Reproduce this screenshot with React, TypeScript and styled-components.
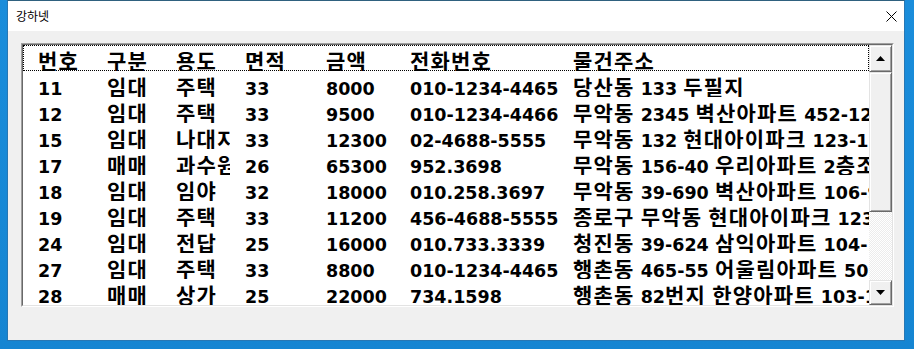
import React from 'react';
import styled, { createGlobalStyle } from 'styled-components';

const Global = createGlobalStyle`
  html, body {
    margin: 0;
    padding: 0;
    background: #1688d6;
  }
  body {
    width: 914px;
    height: 349px;
    overflow: hidden;
    font-family: "Noto Sans CJK KR", "Noto Sans", sans-serif;
  }
`;

const Desktop = styled.div`
  width: 914px;
  height: 349px;
  box-sizing: border-box;
  padding-left: 7px;
  background: linear-gradient(180deg, #1a8ddb 0%, #1585d2 100%);
`;

const Window = styled.div`
  width: 898px;
  height: 341px;
  box-sizing: border-box;
  border: 1px solid #2777b4;
  border-top-color: #2f617f;
  background: #f0f0f0;
  display: flex;
  flex-direction: column;
`;

const TitleBar = styled.div`
  height: 30px;
  flex: none;
  background: #ffffff;
  display: flex;
  align-items: center;
  justify-content: space-between;
  padding: 0 7px 0 8px;
`;

const Title = styled.span`
  font-family: "Noto Sans CJK KR", sans-serif;
  font-size: 12px;
  color: #000;
  line-height: 1;
  padding-bottom: 1px;
`;

const CloseIcon = styled.svg`
  width: 11px;
  height: 11px;
  display: block;
  margin-top: 1px;
`;

const Client = styled.div`
  flex: 1;
  padding: 12px 10px 0 13px;
`;

const SunkenOuter = styled.div`
  width: 873px;
  height: 264px;
  box-sizing: border-box;
  border: 1px solid;
  border-color: #a0a0a0 #ffffff #ffffff #a0a0a0;
`;

const SunkenInner = styled.div`
  width: 100%;
  height: 100%;
  box-sizing: border-box;
  border: 1px solid;
  border-color: #696969 #e3e3e3 #e3e3e3 #696969;
  display: flex;
`;

const ListContent = styled.div`
  flex: 1;
  min-width: 0;
  background: #ffffff;
  overflow: hidden;
`;

const Row = styled.div<{ $focus?: boolean }>`
  height: 26px;
  display: flex;
  padding-left: 15px;
  box-sizing: border-box;
  width: 100%;
  outline: ${(p) => (p.$focus ? '1px dotted #000' : 'none')};
  outline-offset: -1px;
`;

const Cell = styled.div<{ $w?: number }>`
  flex: ${(p) => (p.$w ? `0 0 ${p.$w}px` : '1 0 auto')};
  height: 26px;
  box-sizing: border-box;
  padding-top: 5px;
  overflow: hidden;
  white-space: nowrap;
  font-family: "DejaVu Sans", "Noto Sans CJK KR", sans-serif;
  font-weight: 700;
  font-size: 17.5px;
  line-height: 26px;
  color: #000;
`;

const Clip = styled.div<{ $w?: number }>`
  width: ${(p) => (p.$w ? `${p.$w}px` : 'auto')};
  overflow: hidden;
  white-space: nowrap;
`;

const Ko = styled.span`
  font-family: "Noto Sans CJK KR", sans-serif;
  font-size: 21px;
  font-weight: 700;
  letter-spacing: 1.2px;
  line-height: 0;
`;

const ScrollBar = styled.div`
  flex: 0 0 23px;
  display: flex;
  flex-direction: column;
`;

const Raised = styled.div<{ $h?: number }>`
  height: ${(p) => (p.$h ? `${p.$h}px` : 'auto')};
  flex: none;
  box-sizing: border-box;
  background: #f0f0f0;
  border: 1px solid;
  border-color: #e3e3e3 #696969 #696969 #e3e3e3;
  box-shadow: inset 1px 1px #ffffff, inset -1px -1px #a0a0a0;
  display: flex;
  align-items: center;
  justify-content: center;
`;

const Track = styled.div`
  flex: 1;
  background: repeating-conic-gradient(#ffffff 0% 25%, #ececec 0% 50%) 0 0 / 2px 2px;
`;

const Arrow = styled.svg`
  width: 9px;
  height: 5px;
  display: block;
`;

const COLS = [69, 69, 69, 81, 84, 163, 0];

const HEADER = ['번호', '구분', '용도', '면적', '금액', '전화번호', '물건주소'];

const DATA: string[][] = [
  ['11', '임대', '주택', '33', '8000', '010-1234-4465', '당산동 133 두필지'],
  ['12', '임대', '주택', '33', '9500', '010-1234-4466', '무악동 2345 벽산아파트 452-1203호'],
  ['15', '임대', '나대지', '33', '12300', '02-4688-5555', '무악동 132 현대아이파크 123-1203호'],
  ['17', '매매', '과수원', '26', '65300', '952.3698', '무악동 156-40 우리아파트 2층조망'],
  ['18', '임대', '임야', '32', '18000', '010.258.3697', '무악동 39-690 벽산아파트 106-905호'],
  ['19', '임대', '주택', '33', '11200', '456-4688-5555', '종로구 무악동 현대아이파크 123-1203호'],
  ['24', '임대', '전답', '25', '16000', '010.733.3339', '청진동 39-624 삼익아파트 104-1103호'],
  ['27', '임대', '주택', '33', '8800', '010-1234-4465', '행촌동 465-55 어울림아파트 502호'],
  ['28', '매매', '상가', '25', '22000', '734.1598', '행촌동 82번지 한양아파트 103-1104호'],
];

const HANGUL = /([\u1100-\u11FF\u3130-\u318F\uAC00-\uD7AF]+)/;

const MixedText = ({ value }: { value: string }) => (
  <>
    {value.split(HANGUL).map((part, i) =>
      part === '' ? null : i % 2 === 1 ? <Ko key={i}>{part}</Ko> : <React.Fragment key={i}>{part}</React.Fragment>
    )}
  </>
);

const ListRow = ({ cells, focus }: { cells: string[]; focus?: boolean }) => (
  <Row $focus={focus}>
    {cells.map((c, i) => (
      <Cell key={i} $w={COLS[i] || undefined}>
        <Clip $w={COLS[i] ? COLS[i] - 15 : undefined}>
          <MixedText value={c} />
        </Clip>
      </Cell>
    ))}
  </Row>
);

export default function App() {
  return (
    <>
      <Global />
      <Desktop>
        <Window>
          <TitleBar>
            <Title>강하넷</Title>
            <CloseIcon viewBox="0 0 11 11">
              <path d="M0.5 0.5 L10.5 10.5 M10.5 0.5 L0.5 10.5" stroke="#000" strokeWidth="1" fill="none" />
            </CloseIcon>
          </TitleBar>
          <Client>
            <SunkenOuter>
              <SunkenInner>
                <ListContent>
                  <ListRow cells={HEADER} focus />
                  {DATA.map((r, i) => (
                    <ListRow key={i} cells={r} />
                  ))}
                </ListContent>
                <ScrollBar>
                  <Raised $h={27}>
                    <Arrow viewBox="0 0 9 5">
                      <polygon points="4.5,0 9,5 0,5" fill="#000" />
                    </Arrow>
                  </Raised>
                  <Raised $h={140} />
                  <Track />
                  <Raised $h={25}>
                    <Arrow viewBox="0 0 9 5">
                      <polygon points="0,0 9,0 4.5,5" fill="#000" />
                    </Arrow>
                  </Raised>
                </ScrollBar>
              </SunkenInner>
            </SunkenOuter>
          </Client>
        </Window>
      </Desktop>
    </>
  );
}
